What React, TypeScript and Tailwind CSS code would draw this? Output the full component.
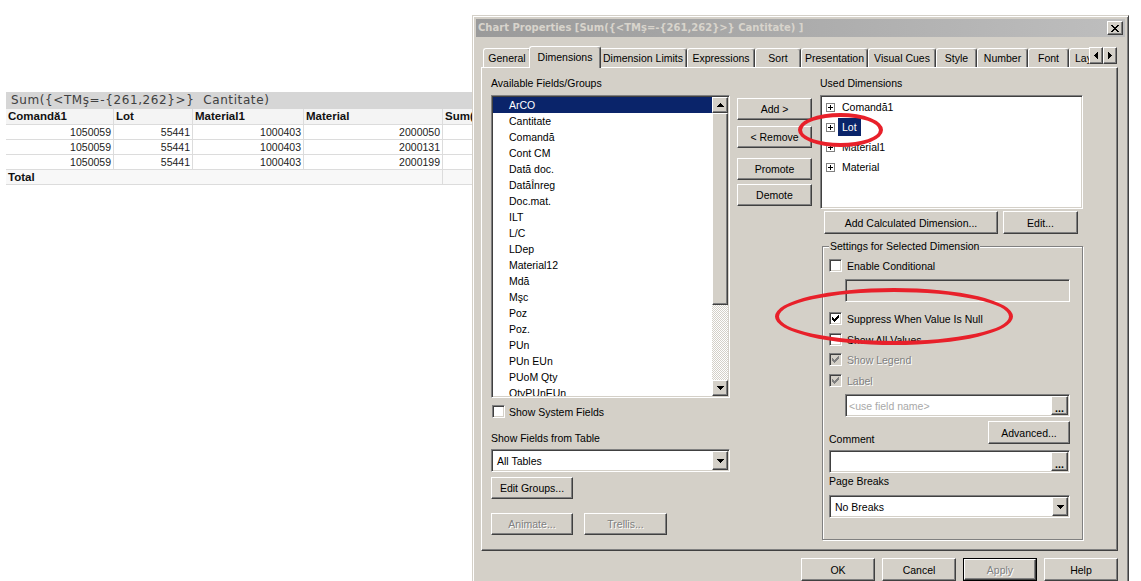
import React from "react";

const raised =
  "border border-t-white border-l-white border-r-[#404040] border-b-[#404040] shadow-[inset_-1px_-1px_0_#808080]";
const sunken =
  "border border-t-[#808080] border-l-[#808080] border-r-white border-b-white shadow-[inset_1px_1px_0_#404040,inset_-1px_-1px_0_#d4d0c8]";
const greyed = "text-[#808080] [text-shadow:1px_1px_0_#ffffff]";

type BtnProps = {
  className?: string;
  disabled?: boolean;
  isDefault?: boolean;
  children: React.ReactNode;
};

function Button({ className = "", disabled = false, isDefault = false, children }: BtnProps) {
  if (isDefault) {
    return (
      <div className={`flex border border-black ${className}`}>
        <div
          className={`flex flex-1 items-center justify-center bg-[#d4d0c8] ${raised} ${disabled ? greyed : ""}`}
        >
          {children}
        </div>
      </div>
    );
  }
  return (
    <div
      className={`flex items-center justify-center bg-[#d4d0c8] ${raised} ${disabled ? greyed : ""} ${className}`}
    >
      {children}
    </div>
  );
}

function CheckBox({ checked = false, disabled = false }: { checked?: boolean; disabled?: boolean }) {
  return (
    <span
      className={`flex h-[13px] w-[13px] shrink-0 items-center justify-center ${sunken} ${
        disabled ? "bg-[#d4d0c8]" : "bg-white"
      }`}
    >
      {checked && (
        <svg width="7" height="7" viewBox="0 0 7 7" shapeRendering="crispEdges">
          <path
            d="M0 2h1v3H0zM1 3h1v3H1zM2 4h1v3H2zM3 3h1v3H3zM4 2h1v3H4zM5 1h1v3H5zM6 0h1v3H6z"
            fill={disabled ? "#808080" : "#000000"}
          />
        </svg>
      )}
    </span>
  );
}

function Arrow({ dir }: { dir: "up" | "down" | "left" | "right" }) {
  const paths = {
    down: "M0 0h7v1H0zM1 1h5v1H1zM2 2h3v1H2zM3 3h1v1H3z",
    up: "M3 0h1v1H3zM2 1h3v1H2zM1 2h5v1H1zM0 3h7v1H0z",
  };
  if (dir === "left" || dir === "right") {
    const d =
      dir === "left"
        ? "M3 0h1v7H3zM2 1h1v5H2zM1 2h1v3H1zM0 3h1v1H0z"
        : "M0 0h1v7H0zM1 1h1v5H1zM2 2h1v3H2zM3 3h1v1H3z";
    return (
      <svg width="4" height="7" viewBox="0 0 4 7" shapeRendering="crispEdges">
        <path d={d} fill="#000" />
      </svg>
    );
  }
  return (
    <svg width="7" height="4" viewBox="0 0 7 4" shapeRendering="crispEdges">
      <path d={paths[dir]} fill="#000" />
    </svg>
  );
}

function Combo({ value, className }: { value: string; className: string }) {
  return (
    <div className={`flex bg-white p-[1px] ${sunken} ${className}`}>
      <div className="flex flex-1 items-center pl-[4px]">{value}</div>
      <div className={`flex w-[16px] items-center justify-center bg-[#d4d0c8] ${raised}`}>
        <Arrow dir="down" />
      </div>
    </div>
  );
}

function DotsField({ placeholder, className }: { placeholder?: string; className: string }) {
  return (
    <div className={`flex bg-white p-[1px] ${sunken} ${className}`}>
      <div className="flex flex-1 items-center pl-[2px] text-[#a8a8a8]">{placeholder}</div>
      <div className={`flex w-[17px] items-end justify-center bg-[#d4d0c8] pb-[1px] font-bold leading-[10px] ${raised}`}>
        ...
      </div>
    </div>
  );
}

function PlusBox() {
  return (
    <span className="flex h-[9px] w-[9px] shrink-0 items-center justify-center border border-[#808080] bg-white">
      <svg width="5" height="5" viewBox="0 0 5 5" shapeRendering="crispEdges">
        <path d="M0 2h5v1H0zM2 0h1v5H2z" fill="#000" />
      </svg>
    </span>
  );
}

const fields = [
  "ArCO",
  "Cantitate",
  "Comandă",
  "Cont CM",
  "Dată doc.",
  "DatăÎnreg",
  "Doc.mat.",
  "ILT",
  "L/C",
  "LDep",
  "Material12",
  "Mdă",
  "Mşc",
  "Poz",
  "Poz.",
  "PUn",
  "PUn EUn",
  "PUoM Qty",
  "QtyPUnEUn",
];

const tabs: { label: string; w: string }[] = [
  { label: "General", w: "w-[48px]" },
  { label: "Dimensions", w: "w-[72px]" },
  { label: "Dimension Limits", w: "w-[88px]" },
  { label: "Expressions", w: "w-[68px]" },
  { label: "Sort", w: "w-[46px]" },
  { label: "Presentation", w: "w-[67px]" },
  { label: "Visual Cues", w: "w-[68px]" },
  { label: "Style", w: "w-[41px]" },
  { label: "Number", w: "w-[51px]" },
  { label: "Font", w: "w-[41px]" },
];

const tableRows = [
  ["1050059", "55441", "1000403", "2000050"],
  ["1050059", "55441", "1000403", "2000131"],
  ["1050059", "55441", "1000403", "2000199"],
];

function SheetTable() {
  const grid = "grid grid-cols-[108px_79px_111px_139px_120px]";
  return (
    <div className="ml-[6px] w-[557px] pt-[92px] font-['Liberation_Sans',Arial,sans-serif] text-[10.5px]">
      <div className="h-[17px] whitespace-pre bg-[#d6d6d6] pl-[5px] font-['DejaVu_Sans',sans-serif] text-[12px] leading-[17px] tracking-[0.6px] text-[#404040]">
        {"Sum({<TMş=-{261,262}>}  Cantitate)"}
      </div>
      <div className={`${grid} h-[16px] border-b border-[#dcdcdc] bg-[#f4f4f4] text-[11.5px] font-bold leading-[15px] text-[#111]`}>
        {["Comandă1", "Lot", "Material1", "Material", "Sum(Cantitate)"].map((h) => (
          <div key={h} className="overflow-hidden whitespace-nowrap border-r border-[#dcdcdc] pl-[2px]">
            {h}
          </div>
        ))}
      </div>
      {tableRows.map((r, i) => (
        <div key={i} className={`${grid} h-[15px] border-b border-[#dcdcdc] bg-white leading-[14px] text-[#222]`}>
          {r.map((c, j) => (
            <div key={j} className="border-r border-[#dcdcdc] pr-[2px] text-right">
              {c}
            </div>
          ))}
          <div className="border-r border-[#dcdcdc]" />
        </div>
      ))}
      <div className="grid h-[15px] grid-cols-[437px_120px] border-b border-[#dcdcdc] bg-[#f8f8f8] text-[11.5px] font-bold leading-[14px] text-[#111]">
        <div className="border-r border-[#dcdcdc] pl-[2px]">Total</div>
        <div />
      </div>
    </div>
  );
}

function Dialog() {
  return (
    <div className="absolute left-[472px] top-[15px] h-[575px] w-[657px] border border-t-[#d4d0c8] border-l-[#d4d0c8] border-r-[#404040] border-b-[#404040] bg-[#d4d0c8] p-[3px] shadow-[inset_1px_1px_0_#ffffff,inset_-1px_-1px_0_#808080] font-['Liberation_Sans',Arial,sans-serif] text-[10.5px] leading-[12px] text-black">
      {/* title bar */}
      <div className="flex h-[18px] items-center bg-gradient-to-r from-[#9a9a9a] to-[#bebebe] pl-[2px] pr-[2px]">
        <div className="flex-1 whitespace-nowrap font-['DejaVu_Sans',sans-serif] text-[10px] font-bold text-[#d8d4cc]">
          {"Chart Properties [Sum({<TMş=-{261,262}>} Cantitate) ]"}
        </div>
        <div className={`flex h-[14px] w-[16px] items-center justify-center bg-[#d4d0c8] ${raised}`}>
          <svg width="8" height="7" viewBox="0 0 8 7" shapeRendering="crispEdges">
            <path
              d="M0 0h2v1H0zM6 0h2v1H6zM1 1h2v1H1zM5 1h2v1H5zM2 2h4v1H2zM3 3h2v1H3zM2 4h4v1H2zM1 5h2v1H1zM5 5h2v1H5zM0 6h2v1H0zM6 6h2v1H6z"
              fill="#000"
            />
          </svg>
        </div>
      </div>

      {/* tabs */}
      <div className="ml-[7px] mt-[9px] flex h-[21px] items-start">
        {tabs.map((t) =>
          t.label === "Dimensions" ? (
            <div
              key={t.label}
              className={`relative z-10 -mx-[2px] flex h-[22px] ${t.w} items-start justify-center whitespace-nowrap rounded-t-[3px] border border-b-0 border-t-white border-l-white border-r-[#404040] bg-[#d4d0c8] pt-[4px] shadow-[inset_-1px_0_0_#808080]`}
            >
              {t.label}
            </div>
          ) : (
            <div
              key={t.label}
              className={`mt-[2px] flex h-[19px] ${t.w} items-start justify-center whitespace-nowrap rounded-t-[3px] border border-b-0 border-t-white border-l-white border-r-[#404040] pt-[3px] shadow-[inset_-1px_0_0_#808080]`}
            >
              {t.label}
            </div>
          )
        )}
        <div className="mt-[2px] flex h-[19px] w-[20px] items-start overflow-hidden whitespace-nowrap rounded-tl-[3px] border-l border-t border-white pl-[5px] pt-[3px]">
          Layout
        </div>
        <div className="mt-[1px] flex">
          <div className={`flex h-[17px] w-[14px] items-center justify-center bg-[#d4d0c8] ${raised}`}>
            <Arrow dir="left" />
          </div>
          <div className={`flex h-[17px] w-[14px] items-center justify-center bg-[#d4d0c8] ${raised}`}>
            <Arrow dir="right" />
          </div>
        </div>
      </div>

      {/* tab panel */}
      <div className={`ml-[5px] flex h-[484px] w-[637px] pl-[9px] pt-[9px] ${raised}`}>
        {/* left column */}
        <div className="flex w-[239px] flex-col">
          <div className="h-[18px]">Available Fields/Groups</div>
          <div className={`flex h-[303px] bg-white p-[1px] ${sunken}`}>
            <div className="flex-1 overflow-hidden">
              {fields.map((f, i) => (
                <div
                  key={f}
                  className={`h-[16px] pl-[16px] leading-[16px] ${i === 0 ? "bg-[#0a246a] text-white" : ""}`}
                >
                  {f}
                </div>
              ))}
            </div>
            <div className="flex w-[16px] flex-col">
              <div className={`flex h-[16px] items-center justify-center bg-[#d4d0c8] ${raised}`}>
                <Arrow dir="up" />
              </div>
              <div className={`h-[192px] bg-[#d4d0c8] ${raised}`} />
              <div className="flex-1 bg-[repeating-conic-gradient(#d4d0c8_0%_25%,#ffffff_0%_50%)] bg-size-[2px_2px]" />
              <div className={`flex h-[16px] items-center justify-center bg-[#d4d0c8] ${raised}`}>
                <Arrow dir="down" />
              </div>
            </div>
          </div>
          <div className="ml-[1px] mt-[7px] flex h-[13px] items-center gap-[4px]">
            <CheckBox />
            <span>Show System Fields</span>
          </div>
          <div className="mt-[14px] h-[12px]">Show Fields from Table</div>
          <Combo value="All Tables" className="mt-[5px] h-[23px] w-[239px]" />
          <Button className="mt-[5px] h-[22px] w-[82px]">Edit Groups...</Button>
          <div className="mt-[14px] flex gap-[11px]">
            <Button disabled className="h-[22px] w-[82px]">
              Animate...
            </Button>
            <Button disabled className="h-[22px] w-[83px]">
              Trellis...
            </Button>
          </div>
        </div>

        {/* middle column */}
        <div className="ml-[7px] flex w-[75px] flex-col">
          <Button className="mt-[21px] h-[22px]">Add &gt;</Button>
          <Button className="mt-[6px] h-[22px]">&lt; Remove</Button>
          <Button className="mt-[10px] h-[22px]">Promote</Button>
          <Button className="mt-[4px] h-[22px]">Demote</Button>
        </div>

        {/* right column */}
        <div className="ml-[8px] flex w-[263px] flex-col">
          <div className="h-[18px]">Used Dimensions</div>
          <div className={`h-[114px] bg-white p-[1px] ${sunken}`}>
            {["Comandă1", "Lot", "Material1", "Material"].map((d) => (
              <div key={d} className="flex h-[20px] items-center pl-[4px]">
                <PlusBox />
                <span
                  className={`ml-[3px] h-[18px] px-[4px] leading-[18px] ${
                    d === "Lot" ? "bg-[#0a246a] text-white" : ""
                  }`}
                >
                  {d}
                </span>
              </div>
            ))}
          </div>
          <div className="mt-[2px] flex">
            <Button className="ml-[4px] h-[23px] w-[174px]">Add Calculated Dimension...</Button>
            <Button className="ml-[5px] h-[23px] w-[75px]">Edit...</Button>
          </div>

          <div className="ml-[2px] mt-[12px] flex h-[294px] w-[261px] flex-col border border-[#808080] shadow-[inset_1px_1px_0_#ffffff,1px_1px_0_#ffffff]">
            <div className="ml-[6px] -mt-[7px] h-[12px] self-start bg-[#d4d0c8] px-[1px]">
              Settings for Selected Dimension
            </div>
            <div className="flex flex-col px-[6px]">
              <div className="mt-[7px] flex h-[13px] items-center gap-[5px]">
                <CheckBox />
                <span>Enable Conditional</span>
              </div>
              <div className={`ml-[16px] mt-[7px] h-[23px] w-[225px] bg-[#d4d0c8] ${sunken}`} />
              <div className="mt-[10px] flex h-[13px] items-center gap-[5px]">
                <CheckBox checked />
                <span>Suppress When Value Is Null</span>
              </div>
              <div className="mt-[8px] flex h-[13px] items-center gap-[5px]">
                <CheckBox />
                <span>Show All Values</span>
              </div>
              <div className="mt-[7px] flex h-[13px] items-center gap-[5px]">
                <CheckBox checked disabled />
                <span className={greyed}>Show Legend</span>
              </div>
              <div className="mt-[8px] flex h-[13px] items-center gap-[5px]">
                <CheckBox checked disabled />
                <span className={greyed}>Label</span>
              </div>
              <DotsField placeholder="<use field name>" className="ml-[16px] mt-[7px] h-[23px] w-[225px]" />
              <div className="mt-[4px] flex h-[23px] w-[241px] items-end justify-between">
                <span className="-mb-[1px]">Comment</span>
                <Button className="h-[23px] w-[82px]">Advanced...</Button>
              </div>
              <DotsField className="mt-[6px] h-[23px] w-[241px]" />
              <div className="mt-[2px] h-[12px]">Page Breaks</div>
              <Combo value="No Breaks" className="mt-[8px] h-[23px] w-[241px]" />
            </div>
          </div>
        </div>
      </div>

      {/* bottom buttons */}
      <div className="ml-[5px] mt-[7px] flex w-[637px] justify-end gap-[7px]">
        <Button className="h-[23px] w-[74px]">OK</Button>
        <Button className="h-[23px] w-[74px]">Cancel</Button>
        <Button isDefault disabled className="h-[23px] w-[74px]">
          Apply
        </Button>
        <Button className="h-[23px] w-[74px]">Help</Button>
      </div>
    </div>
  );
}

export default function App() {
  return (
    <div className="relative h-[581px] w-[1141px] overflow-hidden bg-white">
      <SheetTable />
      <Dialog />
      {/* red marker ellipses drawn over the screenshot */}
      <div className="absolute left-[798px] top-[113px] h-[34px] w-[85px] rounded-[50%] border-[4px] border-[#e8202a]" />
      <div className="absolute left-[775px] top-[288px] h-[57px] w-[238px] rounded-[50%] border-[4px] border-[#e8202a]" />
    </div>
  );
}
